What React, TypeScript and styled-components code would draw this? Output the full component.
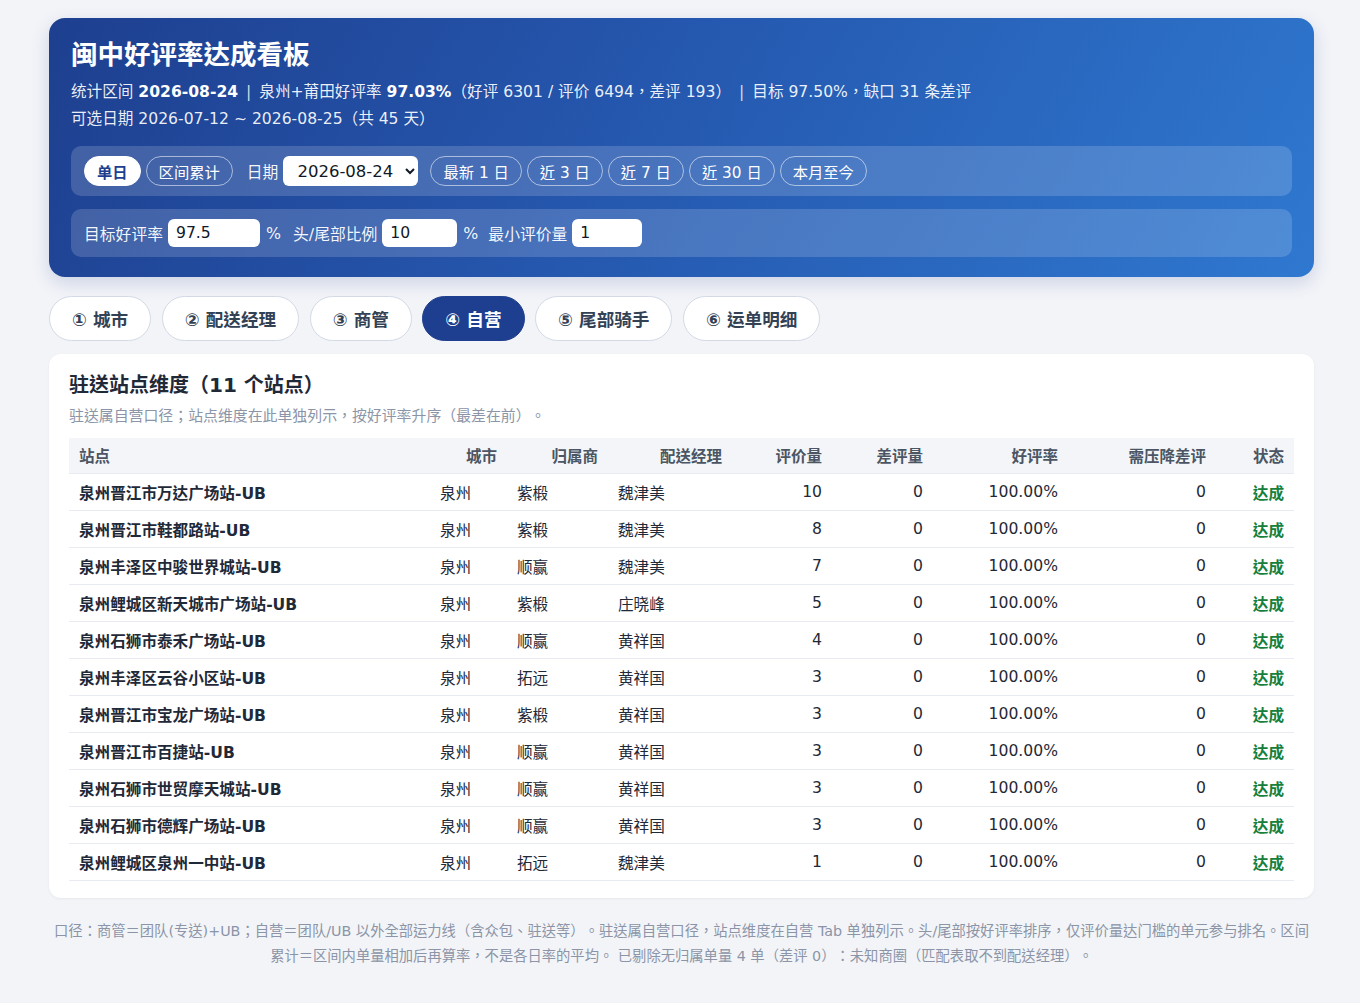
import React from 'react';
import styled, { createGlobalStyle } from 'styled-components';

const GlobalStyle = createGlobalStyle`
  * { box-sizing: border-box; }
  body {
    margin: 0;
    background: #f3f4f8;
    font-family: "DejaVu Sans", "Noto Sans CJK TC", sans-serif;
    color: #1f2937;
    text-spacing-trim: space-all;
  }
`;

const Page = styled.div`
  width: 1265px;
  margin: 0 0 0 49px;
  padding: 18px 0 30px;
`;

const Hero = styled.header`
  border-radius: 16px;
  padding: 20px 22px 20px;
  color: #fff;
  background: linear-gradient(120deg, #1e3f8f 0%, #2557ae 45%, #2f78d0 100%);
  box-shadow: 0 6px 18px rgba(30, 63, 143, 0.18);
`;

const Title = styled.h1`
  margin: 0;
  font-size: 26.5px;
  font-weight: 700;
  line-height: 34px;
`;

const Meta = styled.div`
  margin-top: 7px;
  font-size: 15.6px;
  line-height: 27px;
  color: rgba(255, 255, 255, 0.92);
  b { color: #fff; font-weight: 700; }
`;

const Sep = styled.span`
  margin: 0 8px;
  color: rgba(255, 255, 255, 0.8);
`;

const Panel = styled.div<{ $first?: boolean }>`
  margin-top: 13px;
  display: flex;
  align-items: center;
  gap: 5px;
  height: ${p => (p.$first ? '50px' : '48px')};
  padding: 0 13px;
  border-radius: 10px;
  background: rgba(255, 255, 255, 0.16);
`;

const Pill = styled.button<{ $on?: boolean }>`
  height: 30px;
  padding: 0 12px;
  border-radius: 15px;
  font: inherit;
  font-size: 15.3px;
  cursor: pointer;
  border: 1px solid ${p => (p.$on ? '#fff' : 'rgba(255,255,255,0.55)')};
  background: ${p => (p.$on ? '#fff' : 'transparent')};
  color: ${p => (p.$on ? '#1e3f8f' : '#fff')};
  font-weight: ${p => (p.$on ? 700 : 400)};
`;

const Label = styled.span<{ $gap?: number }>`
  font-size: 15.8px;
  color: rgba(255, 255, 255, 0.95);
  margin-left: ${p => p.$gap ?? 0}px;
`;

const DateSelect = styled.select`
  width: 135px;
  height: 30px;
  border: none;
  border-radius: 6px;
  background: #fff;
  color: #111827;
  font: inherit;
  font-size: 16.5px;
  padding: 0 8px 0 10px;
  margin: 0 7px 0 0;
`;

const NumInput = styled.input<{ $w: number }>`
  width: ${p => p.$w}px;
  height: 28px;
  border: none;
  border-radius: 6px;
  background: #fff;
  color: #111827;
  font: inherit;
  font-size: 15.6px;
  padding: 0 8px;
`;

const Tabs = styled.nav`
  display: flex;
  gap: 10.5px;
  margin: 19px 0 13px;
`;

const Tab = styled.button<{ $on?: boolean }>`
  height: 45px;
  padding: 0 22px;
  border-radius: 23px;
  font: inherit;
  font-size: 17.6px;
  font-weight: 700;
  cursor: pointer;
  border: 1px solid ${p => (p.$on ? '#1e3f8f' : '#d3dae6')};
  background: ${p => (p.$on ? '#1e3f8f' : '#fff')};
  color: ${p => (p.$on ? '#fff' : '#334155')};
`;

const Card = styled.section`
  background: #fff;
  border-radius: 12px;
  padding: 17px 20px 17px;
  box-shadow: 0 1px 3px rgba(15, 23, 42, 0.05);
`;

const CardTitle = styled.h2`
  margin: 0;
  font-size: 20px;
  font-weight: 700;
  line-height: 28px;
  color: #1f2937;
`;

const CardSub = styled.p`
  margin: 6px 0 11px;
  font-size: 14.9px;
  line-height: 22px;
  color: #8b95a7;
`;

const Table = styled.table`
  width: 100%;
  border-collapse: collapse;
  table-layout: fixed;
  font-size: 15.6px;
`;

const Th = styled.th<{ $left?: boolean }>`
  height: 35px;
  padding: 0 10px;
  background: #f3f5f9;
  color: #4b5563;
  font-weight: 700;
  font-size: 15.5px;
  text-align: ${p => (p.$left ? 'left' : 'right')};
  border-bottom: 1px solid #e8ecf2;
`;

const Td = styled.td<{ $align?: 'left' | 'right'; $bold?: boolean; $ok?: boolean }>`
  height: 37px;
  padding: 0 10px;
  border-bottom: 1px solid #e8ecf2;
  text-align: ${p => p.$align ?? 'left'};
  font-weight: ${p => (p.$bold || p.$ok ? 700 : 400)};
  color: ${p => (p.$ok ? '#15803d' : '#1f2937')};
  white-space: nowrap;
`;

const Footer = styled.footer`
  margin-top: 21px;
  text-align: center;
  font-size: 14.3px;
  line-height: 25px;
  color: #8b95a7;
`;

const rows: [string, string, string, string, number][] = [
  ['泉州晋江市万达广场站-UB', '泉州', '紫椴', '魏津美', 10],
  ['泉州晋江市鞋都路站-UB', '泉州', '紫椴', '魏津美', 8],
  ['泉州丰泽区中骏世界城站-UB', '泉州', '顺赢', '魏津美', 7],
  ['泉州鲤城区新天城市广场站-UB', '泉州', '紫椴', '庄晓峰', 5],
  ['泉州石狮市泰禾广场站-UB', '泉州', '顺赢', '黄祥国', 4],
  ['泉州丰泽区云谷小区站-UB', '泉州', '拓远', '黄祥国', 3],
  ['泉州晋江市宝龙广场站-UB', '泉州', '紫椴', '黄祥国', 3],
  ['泉州晋江市百捷站-UB', '泉州', '顺赢', '黄祥国', 3],
  ['泉州石狮市世贸摩天城站-UB', '泉州', '顺赢', '黄祥国', 3],
  ['泉州石狮市德辉广场站-UB', '泉州', '顺赢', '黄祥国', 3],
  ['泉州鲤城区泉州一中站-UB', '泉州', '拓远', '魏津美', 1],
];

const tabs = ['① 城市', '② 配送经理', '③ 商管', '④ 自营', '⑤ 尾部骑手', '⑥ 运单明细'];
const quick = ['最新 1 日', '近 3 日', '近 7 日', '近 30 日', '本月至今'];
const widths = [361, 77, 101, 124, 100, 101, 135, 148, 78];

export default function App(): JSX.Element {
  return (
    <Page>
      <GlobalStyle />
      <Hero>
        <Title>闽中好评率达成看板</Title>
        <Meta>
          统计区间 <b>2026-08-24</b>
          <Sep>|</Sep>
          泉州+莆田好评率 <b>97.03%</b>（好评 6301 / 评价 6494，差评 193）
          <Sep>|</Sep>
          目标 97.50%，缺口 31 条差评
          <br />
          可选日期 2026-07-12 ~ 2026-08-25（共 45 天）
        </Meta>
        <Panel $first>
          <Pill $on>单日</Pill>
          <Pill>区间累计</Pill>
          <Label $gap={9}>日期</Label>
          <DateSelect defaultValue="2026-08-24">
            <option>2026-08-24</option>
          </DateSelect>
          {quick.map(q => (
            <Pill key={q}>{q}</Pill>
          ))}
        </Panel>
        <Panel>
          <Label>目标好评率</Label>
          <NumInput $w={92} defaultValue="97.5" />
          <Label $gap={1}>%</Label>
          <Label $gap={7}>头/尾部比例</Label>
          <NumInput $w={75} defaultValue="10" />
          <Label $gap={1}>%</Label>
          <Label $gap={5}>最小评价量</Label>
          <NumInput $w={70} defaultValue="1" />
        </Panel>
      </Hero>

      <Tabs>
        {tabs.map((t, i) => (
          <Tab key={t} $on={i === 3}>{t}</Tab>
        ))}
      </Tabs>

      <Card>
        <CardTitle>驻送站点维度（11 个站点）</CardTitle>
        <CardSub>驻送属自营口径；站点维度在此单独列示，按好评率升序（最差在前）。</CardSub>
        <Table>
          <colgroup>
            {widths.map((w, i) => (
              <col key={i} style={{ width: w }} />
            ))}
          </colgroup>
          <thead>
            <tr>
              <Th $left>站点</Th>
              <Th>城市</Th>
              <Th>归属商</Th>
              <Th>配送经理</Th>
              <Th>评价量</Th>
              <Th>差评量</Th>
              <Th>好评率</Th>
              <Th>需压降差评</Th>
              <Th>状态</Th>
            </tr>
          </thead>
          <tbody>
            {rows.map(r => (
              <tr key={r[0]}>
                <Td $bold>{r[0]}</Td>
                <Td>{r[1]}</Td>
                <Td>{r[2]}</Td>
                <Td>{r[3]}</Td>
                <Td $align="right">{r[4]}</Td>
                <Td $align="right">0</Td>
                <Td $align="right">100.00%</Td>
                <Td $align="right">0</Td>
                <Td $align="right" $ok>达成</Td>
              </tr>
            ))}
          </tbody>
        </Table>
      </Card>

      <Footer>
        口径：商管＝团队(专送)+UB；自营＝团队/UB 以外全部运力线（含众包、驻送等）。驻送属自营口径，站点维度在自营 Tab 单独列示。头/尾部按好评率排序，仅评价量达门槛的单元参与排名。区间累计＝区间内单量相加后再算率，不是各日率的平均。 已剔除无归属单量 4 单（差评 0）：未知商圈（匹配表取不到配送经理）。
      </Footer>
    </Page>
  );
}
